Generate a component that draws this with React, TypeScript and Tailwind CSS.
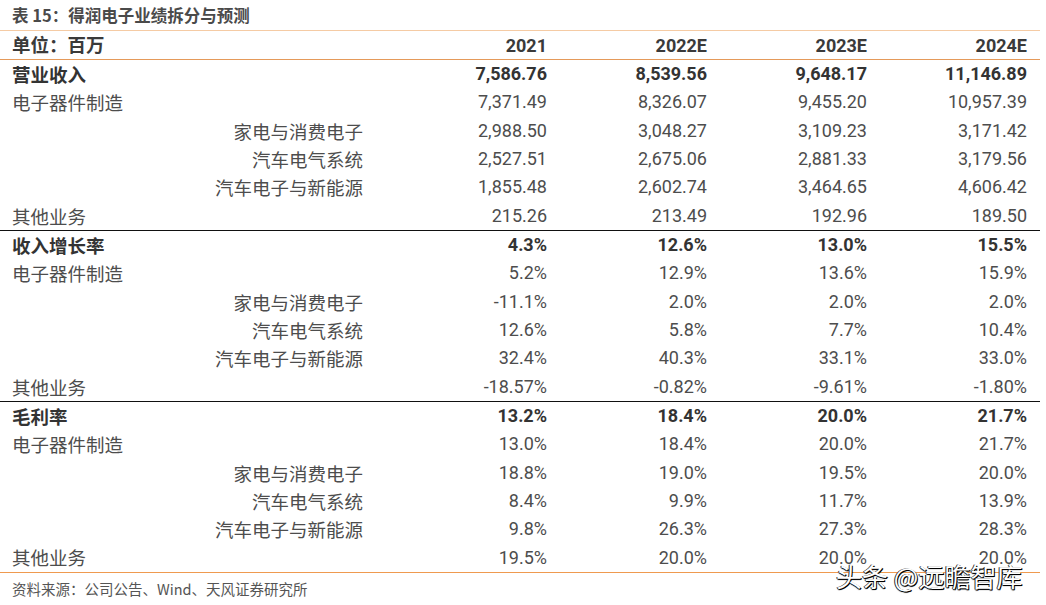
import React from 'react'

const CN = "font-['Noto_Sans_CJK_SC',sans-serif]"
const NUM = "font-['Roboto','Noto_Sans_CJK_SC',sans-serif]"

type Row = { label: string; sub?: boolean; bold?: boolean; values: string[] }

const GROUPS: Row[][] = [
  [
    { label: '营业收入', bold: true, values: ['7,586.76', '8,539.56', '9,648.17', '11,146.89'] },
    { label: '电子器件制造', values: ['7,371.49', '8,326.07', '9,455.20', '10,957.39'] },
    { label: '家电与消费电子', sub: true, values: ['2,988.50', '3,048.27', '3,109.23', '3,171.42'] },
    { label: '汽车电气系统', sub: true, values: ['2,527.51', '2,675.06', '2,881.33', '3,179.56'] },
    { label: '汽车电子与新能源', sub: true, values: ['1,855.48', '2,602.74', '3,464.65', '4,606.42'] },
    { label: '其他业务', values: ['215.26', '213.49', '192.96', '189.50'] },
  ],
  [
    { label: '收入增长率', bold: true, values: ['4.3%', '12.6%', '13.0%', '15.5%'] },
    { label: '电子器件制造', values: ['5.2%', '12.9%', '13.6%', '15.9%'] },
    { label: '家电与消费电子', sub: true, values: ['-11.1%', '2.0%', '2.0%', '2.0%'] },
    { label: '汽车电气系统', sub: true, values: ['12.6%', '5.8%', '7.7%', '10.4%'] },
    { label: '汽车电子与新能源', sub: true, values: ['32.4%', '40.3%', '33.1%', '33.0%'] },
    { label: '其他业务', values: ['-18.57%', '-0.82%', '-9.61%', '-1.80%'] },
  ],
  [
    { label: '毛利率', bold: true, values: ['13.2%', '18.4%', '20.0%', '21.7%'] },
    { label: '电子器件制造', values: ['13.0%', '18.4%', '20.0%', '21.7%'] },
    { label: '家电与消费电子', sub: true, values: ['18.8%', '19.0%', '19.5%', '20.0%'] },
    { label: '汽车电气系统', sub: true, values: ['8.4%', '9.9%', '11.7%', '13.9%'] },
    { label: '汽车电子与新能源', sub: true, values: ['9.8%', '26.3%', '27.3%', '28.3%'] },
    { label: '其他业务', values: ['19.5%', '20.0%', '20.0%', '20.0%'] },
  ],
]

const GRID = 'grid grid-cols-[387px_160px_160px_160px_160px]'

export default function App() {
  return (
    <div className="relative w-[1046px] h-[605px] bg-white overflow-hidden">
      {/* title */}
      <div className={`h-[30px] pl-[12px] flex items-center text-[16.5px] font-bold text-[#4a4a4a] ${CN}`}>
        表 15：得润电子业绩拆分与预测
      </div>

      <div className="w-[1040px]">
        {/* header */}
        <div className={`${GRID} h-[30px] border-y border-t-[#f5cba4] border-b-[#e59a5a] items-center`}>
          <div className={`pl-[12px] text-[18.5px] font-bold text-[#3a3a3a] ${CN}`}>单位：百万</div>
          {['2021', '2022E', '2023E', '2024E'].map(y => (
            <div key={y} className={`text-right text-[18px] font-bold text-[#3a3a3a] ${NUM}`}>{y}</div>
          ))}
        </div>

        {GROUPS.map((g, gi) => (
          <div key={gi} className={gi > 0 ? 'border-t border-[#111]' : ''}>
            {g.map((r, ri) => (
              <div key={ri} className={`${GRID} h-[28.33px] items-center`}>
                <div
                  className={`text-[18.5px] leading-none ${CN} ${r.sub ? 'text-right pr-[24px]' : 'pl-[12px]'} ${r.bold ? 'font-bold text-[#333]' : 'text-[#4d4d4d]'}`}
                >
                  {r.label}
                </div>
                {r.values.map((v, vi) => (
                  <div
                    key={vi}
                    className={`text-right text-[18px] leading-none ${NUM} ${r.bold ? 'font-bold text-[#333]' : 'text-[#4d4d4d]'}`}
                  >
                    {v}
                  </div>
                ))}
              </div>
            ))}
          </div>
        ))}

        {/* footer */}
        <div className={`border-t border-[#ef9a4f] h-[32px] pl-[12px] flex items-center text-[14.5px] text-[#555] ${CN}`}>
          资料来源：公司公告、Wind、天风证券研究所
        </div>
      </div>

      {/* watermark */}
      <div
        className={`absolute left-[836px] top-[563px] text-[26px] text-white leading-none ${CN} [text-shadow:1px_1px_0_#000,-1px_0_0_#333,0_1px_1px_#000]`}
      >
        头条 @远瞻智库
      </div>
    </div>
  )
}
